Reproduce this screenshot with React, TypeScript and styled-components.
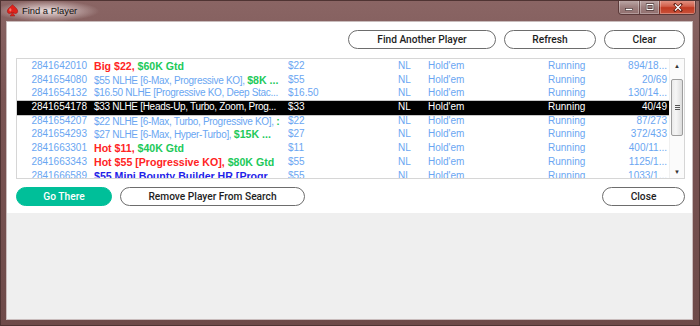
import React from 'react';
import styled, { createGlobalStyle, css } from 'styled-components';

const GlobalStyle = createGlobalStyle`
  html, body {
    margin: 0;
    padding: 0;
    background: #6f4b4a;
  }
  * {
    box-sizing: border-box;
  }
`;

const colors = {
  link: '#6aa6f2',
  red: '#ff2424',
  green: '#22c95a',
  blue: '#1f1fe8',
  teal: '#00bf99',
  paleGray: '#efefef',
};

const Window = styled.div`
  width: 700px;
  height: 326px;
  display: flex;
  flex-direction: column;
  background: linear-gradient(180deg, #8a6564 0%, #7a5554 30%, #6e4a49 100%);
  border: 1px solid #4f3433;
  overflow: hidden;
`;

const TitleBar = styled.div`
  height: 20px;
  flex: none;
  display: flex;
  align-items: flex-start;
  padding-left: 5px;
  background:
    radial-gradient(ellipse 70px 14px at 46px 10px, rgba(255, 245, 245, 0.85), rgba(255, 255, 255, 0) 75%);
`;

const AppIcon = styled.svg`
  margin-top: 3px;
  width: 13px;
  height: 13px;
  flex: none;
`;

const Title = styled.span`
  margin-left: 3px;
  margin-top: 4px;
  font: 9.4px 'Liberation Sans', Arial, sans-serif;
  color: #111;
`;

const Controls = styled.div`
  margin-left: auto;
  margin-right: 3px;
  margin-top: -1px;
  display: flex;
  height: 15px;
  border: 1px solid rgba(60, 30, 30, 0.6);
  border-top: none;
  border-radius: 0 0 4px 4px;
  overflow: hidden;
`;

const ControlButton = styled.div<{ $kind: 'min' | 'max' | 'close' }>`
  width: ${p => (p.$kind === 'close' ? 36 : 20)}px;
  display: flex;
  align-items: center;
  justify-content: center;
  border-left: ${p => (p.$kind === 'min' ? 'none' : '1px solid rgba(60, 30, 30, 0.55)')};
  background: ${p =>
    p.$kind === 'close'
      ? 'linear-gradient(180deg, #e39a8b 0%, #d2604b 45%, #bf3a22 55%, #c9513a 100%)'
      : 'linear-gradient(180deg, rgba(255,255,255,0.45) 0%, rgba(255,255,255,0.18) 50%, rgba(255,255,255,0.08) 100%)'};
  box-shadow: inset 0 0 0 1px rgba(255, 255, 255, 0.3);
`;

const ClientArea = styled.div`
  flex: 1;
  margin: 0 6px 5px 5px;
  display: flex;
  flex-direction: column;
  border: 1px solid #c9bcbc;
  background: ${colors.paleGray};
`;

const Panel = styled.div`
  background: #fff;
  height: 191px;
  padding: 8px 7px 0 9px;
  display: flex;
  flex-direction: column;
`;

const ButtonRow = styled.div<{ $top?: boolean }>`
  display: flex;
  align-items: center;
  gap: 8px;
  height: 19px;
  ${p =>
    p.$top
      ? css`
          justify-content: flex-end;
          margin-bottom: 9px;
        `
      : css`
          margin-top: 8px;
        `}
`;

const PillButton = styled.button<{ $w: number; $primary?: boolean; $push?: boolean }>`
  width: ${p => p.$w}px;
  height: 19px;
  padding: 0;
  border-radius: 10px;
  font: 500 10.2px Roboto, 'Liberation Sans', sans-serif;
  color: ${p => (p.$primary ? '#fff' : '#1e1e1e')};
  background: ${p => (p.$primary ? colors.teal : '#fff')};
  border: 1px solid ${p => (p.$primary ? colors.teal : '#6d6d6d')};
  margin-left: ${p => (p.$push ? 'auto' : '0')};
`;

const ListBox = styled.div`
  height: 121px;
  border: 1px solid #d6d6d6;
  display: flex;
  overflow: hidden;
`;

const Rows = styled.div`
  flex: 1;
  overflow: hidden;
  padding-top: 1px;
`;

const Row = styled.div<{ $selected?: boolean }>`
  display: grid;
  grid-template-columns: 72px 192px 117px 30px 120px 70px 1fr;
  height: 13.7px;
  line-height: 13.7px;
  font: 10px 'Liberation Sans', Arial, sans-serif;
  white-space: nowrap;
  color: ${p => (p.$selected ? '#fff' : colors.link)};
  background: ${p => (p.$selected ? '#000' : 'transparent')};
  box-shadow: ${p => (p.$selected ? '0 -1px 0 #c8c8c8, 0 1px 0 #c8c8c8' : 'none')};
`;

const Cell = styled.div<{ $align?: 'left' | 'right'; $pad?: number }>`
  overflow: hidden;
  text-align: ${p => p.$align ?? 'left'};
  ${p => (p.$align === 'right' ? `padding-right: ${p.$pad ?? 0}px;` : `padding-left: ${p.$pad ?? 0}px;`)}
`;

const Seg = styled.span<{ $tone: 'plain' | 'red' | 'green' | 'blue'; $selected?: boolean }>`
  letter-spacing: -0.3px;
  ${p =>
    p.$tone !== 'plain' &&
    css`
      font-weight: bold;
      font-size: 10.6px;
      letter-spacing: 0;
    `}
  color: ${p =>
    p.$selected
      ? '#fff'
      : p.$tone === 'red'
      ? colors.red
      : p.$tone === 'green'
      ? colors.green
      : p.$tone === 'blue'
      ? colors.blue
      : colors.link};
`;

const ScrollBar = styled.div`
  width: 15px;
  flex: none;
  display: flex;
  flex-direction: column;
  align-items: center;
  background: #fbfbfb;
  border-left: 1px solid #f0f0f0;
`;

const Arrow = styled.div`
  height: 13px;
  width: 100%;
  display: flex;
  align-items: center;
  justify-content: center;
  color: #333;
  font-size: 6px;
  line-height: 1;
`;

const Thumb = styled.div`
  margin-top: 7px;
  width: 12px;
  height: 57px;
  border: 1px solid #9d9d9d;
  border-radius: 2px;
  background: linear-gradient(90deg, #eaeaea 0%, #f6f6f6 40%, #dcdcdc 100%);
  display: flex;
  flex-direction: column;
  align-items: center;
  justify-content: center;
  gap: 1px;
`;

const Grip = styled.div`
  width: 5px;
  height: 1px;
  background: #555;
`;

const Track = styled.div`
  flex: 1;
`;

type Tone = 'plain' | 'red' | 'green' | 'blue';
type Entry = {
  id: string;
  name: [Tone, string][];
  price: string;
  players: string;
  selected?: boolean;
};

const entries: Entry[] = [
  { id: '2841642010', name: [['red', 'Big $22, '], ['green', '$60K Gtd']], price: '$22', players: '894/18...' },
  { id: '2841654080', name: [['plain', '$55 NLHE [6-Max, Progressive KO], '], ['green', '$8K ...']], price: '$55', players: '20/69' },
  { id: '2841654132', name: [['plain', '$16.50 NLHE [Progressive KO, Deep Stac...']], price: '$16.50', players: '130/14...' },
  { id: '2841654178', name: [['plain', '$33 NLHE [Heads-Up, Turbo, Zoom, Prog...']], price: '$33', players: '40/49', selected: true },
  { id: '2841654207', name: [['plain', '$22 NLHE [6-Max, Turbo, Progressive KO], '], ['green', ':']], price: '$22', players: '87/273' },
  { id: '2841654293', name: [['plain', '$27 NLHE [6-Max, Hyper-Turbo], '], ['green', '$15K ...']], price: '$27', players: '372/433' },
  { id: '2841663301', name: [['red', 'Hot $11, '], ['green', '$40K Gtd']], price: '$11', players: '400/11...' },
  { id: '2841663343', name: [['red', 'Hot $55 [Progressive KO], '], ['green', '$80K Gtd']], price: '$55', players: '1125/1...' },
  { id: '2841666589', name: [['blue', '$55 Mini Bounty Builder HR [Progr...']], price: '$55', players: '1033/1...' },
];

const SpadeIcon = () => (
  <AppIcon viewBox="0 0 12 12">
    <path
      d="M6 0.6 C4.4 2.6 1.2 4.2 1.2 6.6 C1.2 8.2 2.6 9 3.8 8.7 C4.6 8.5 5.2 8 5.5 7.5 C5.4 8.8 4.8 10 3.8 11 L8.2 11 C7.2 10 6.6 8.8 6.5 7.5 C6.8 8 7.4 8.5 8.2 8.7 C9.4 9 10.8 8.2 10.8 6.6 C10.8 4.2 7.6 2.6 6 0.6 Z"
      fill="#e0231c"
      stroke="#9c1410"
      strokeWidth="0.5"
    />
    <ellipse cx="4" cy="5.4" rx="1" ry="1.5" fill="#ff9a8c" opacity="0.7" />
  </AppIcon>
);

const ControlGlyph = ({ kind }: { kind: 'min' | 'max' | 'close' }) => (
  <svg width="10" height="9" viewBox="0 0 10 9">
    {kind === 'min' && <rect x="1.5" y="5.5" width="7" height="2" fill="#fff" stroke="#3a2828" strokeWidth="0.6" />}
    {kind === 'max' && (
      <rect x="2" y="1.5" width="6" height="5" fill="none" stroke="#3a2828" strokeWidth="2.2" />
    )}
    {kind === 'max' && <rect x="2" y="1.5" width="6" height="5" fill="none" stroke="#fff" strokeWidth="1" />}
    {kind === 'close' && (
      <path d="M2 1.5 L8 7.5 M8 1.5 L2 7.5" stroke="#5a1a10" strokeWidth="2.6" strokeLinecap="square" />
    )}
    {kind === 'close' && <path d="M2 1.5 L8 7.5 M8 1.5 L2 7.5" stroke="#fff" strokeWidth="1.4" />}
  </svg>
);

const App: React.FC = () => {
  return (
    <>
      <GlobalStyle />
      <Window>
        <TitleBar>
          <SpadeIcon />
          <Title>Find a Player</Title>
          <Controls>
            <ControlButton $kind="min">
              <ControlGlyph kind="min" />
            </ControlButton>
            <ControlButton $kind="max">
              <ControlGlyph kind="max" />
            </ControlButton>
            <ControlButton $kind="close">
              <ControlGlyph kind="close" />
            </ControlButton>
          </Controls>
        </TitleBar>

        <ClientArea>
          <Panel>
            <ButtonRow $top>
              <PillButton $w={148}>Find Another Player</PillButton>
              <PillButton $w={92}>Refresh</PillButton>
              <PillButton $w={81}>Clear</PillButton>
            </ButtonRow>

            <ListBox>
              <Rows>
                {entries.map(e => (
                  <Row key={e.id} $selected={e.selected}>
                    <Cell $align="right" $pad={2}>{e.id}</Cell>
                    <Cell $pad={5}>
                      {e.name.map(([tone, text], i) => (
                        <Seg key={i} $tone={tone} $selected={e.selected}>
                          {text}
                        </Seg>
                      ))}
                    </Cell>
                    <Cell $pad={7}>{e.price}</Cell>
                    <Cell>NL</Cell>
                    <Cell>Hold'em</Cell>
                    <Cell>Running</Cell>
                    <Cell $align="right" $pad={2}>{e.players}</Cell>
                  </Row>
                ))}
              </Rows>
              <ScrollBar>
                <Arrow>▲</Arrow>
                <Thumb>
                  <Grip />
                  <Grip />
                  <Grip />
                </Thumb>
                <Track />
                <Arrow>▼</Arrow>
              </ScrollBar>
            </ListBox>

            <ButtonRow>
              <PillButton $w={96} $primary>Go There</PillButton>
              <PillButton $w={185}>Remove Player From Search</PillButton>
              <PillButton $w={83} $push>Close</PillButton>
            </ButtonRow>
          </Panel>
        </ClientArea>
      </Window>
    </>
  );
};

export default App;
